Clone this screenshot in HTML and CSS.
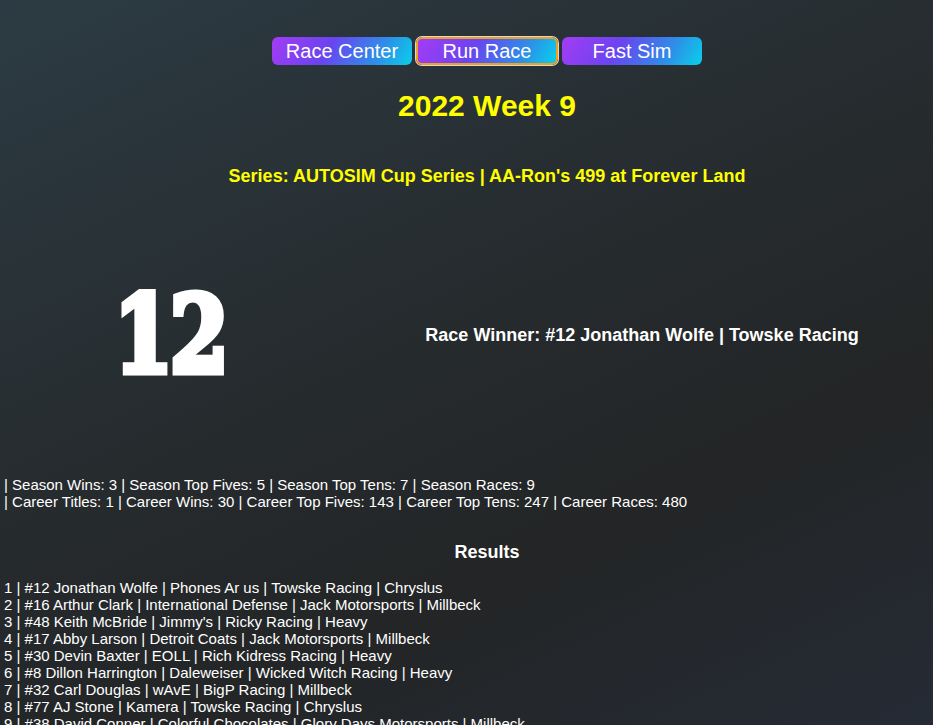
FILE: index.html
```html
<!DOCTYPE html>
<html>
<head>
<meta charset="utf-8">
<link rel="stylesheet" href="styles.css">
</head>
<body>
<div class="page">
<nav class="nav">
  <button class="btn">Race Center</button>
  <button class="btn btn-active">Run Race</button>
  <button class="btn">Fast Sim</button>
</nav>
<h1 class="week">2022 Week 9</h1>
<h3 class="series">Series: AUTOSIM Cup Series | AA-Ron's 499 at Forever Land</h3>
<section class="winner">
  <div class="car-number"><span>12</span></div>
  <div class="winner-text">Race Winner: #12 Jonathan Wolfe | Towske Racing</div>
</section>
<div class="stats">
  <div>| Season Wins: 3 | Season Top Fives: 5 | Season Top Tens: 7 | Season Races: 9</div>
  <div>| Career Titles: 1 | Career Wins: 30 | Career Top Fives: 143 | Career Top Tens: 247 | Career Races: 480</div>
</div>
<h3 class="results-title">Results</h3>
<div class="results">
  <div>1 | #12 Jonathan Wolfe | Phones Ar us | Towske Racing | Chryslus</div>
  <div>2 | #16 Arthur Clark | International Defense | Jack Motorsports | Millbeck</div>
  <div>3 | #48 Keith McBride | Jimmy's | Ricky Racing | Heavy</div>
  <div>4 | #17 Abby Larson | Detroit Coats | Jack Motorsports | Millbeck</div>
  <div>5 | #30 Devin Baxter | EOLL | Rich Kidress Racing | Heavy</div>
  <div>6 | #8 Dillon Harrington | Daleweiser | Wicked Witch Racing | Heavy</div>
  <div>7 | #32 Carl Douglas | wAvE | BigP Racing | Millbeck</div>
  <div>8 | #77 AJ Stone | Kamera | Towske Racing | Chryslus</div>
  <div>9 | #38 David Conner | Colorful Chocolates | Glory Days Motorsports | Millbeck</div>
</div>
</div>
</body>
</html>
```

FILE: styles.css
```css
html, body {
  margin: 0;
  padding: 0;
  height: 725px;
  overflow: hidden;
}
body {
  background: linear-gradient(155deg, #2c3b43 0%, #262b2e 45%, #232526 70%, #252b35 100%);
  color: #ffffff;
  font-family: "Liberation Sans", Arial, sans-serif;
}
.page {
  width: 966px;
  padding: 0 4px;
}
.nav {
  display: flex;
  justify-content: center;
  gap: 4px;
  padding-top: 37px;
}
.btn {
  font-family: "Liberation Sans", Arial, sans-serif;
  font-size: 20px;
  color: #ffffff;
  height: 28px;
  width: 140px;
  border: none;
  border-radius: 6px;
  background: linear-gradient(120deg, #a43cf4 0%, #6a44f0 40%, #2e8ee8 75%, #08d0ea 100%);
  padding: 0;
  line-height: 28px;
}
.btn-active {
  width: 142px;
  border: 2px solid #f0a020;
  box-shadow: 0 0 0 1px #d8d8d8;
  line-height: 24px;
}
.week {
  margin: 24px 0 0;
  text-align: center;
  color: #ffff00;
  font-size: 30px;
  line-height: 34px;
  font-weight: bold;
}
.series {
  margin: 43px 0 0;
  text-align: center;
  color: #ffff00;
  font-size: 18px;
  line-height: 20px;
  font-weight: bold;
}
.winner {
  display: grid;
  grid-template-columns: 332px 612px;
  align-items: center;
  margin-top: 79px;
  height: 136px;
}
.car-number {
  text-align: center;
  font-family: "DejaVu Serif", serif;
  font-weight: bold;
  font-size: 106px;
  line-height: 140px;
  color: #ffffff;
}
.car-number span {
  display: inline-block;
  -webkit-text-stroke: 7px #ffffff;
  letter-spacing: -4px;
  transform: scaleX(0.8);
}
.winner-text {
  text-align: center;
  font-size: 18px;
  font-weight: bold;
  line-height: 20px;
}
.stats {
  margin-top: 75px;
  font-size: 15px;
  line-height: 17px;
}
.results-title {
  margin: 32px 0 0;
  text-align: center;
  font-size: 18px;
  line-height: 20px;
  font-weight: bold;
}
.results {
  margin-top: 17px;
  font-size: 15px;
  line-height: 17px;
}
```
